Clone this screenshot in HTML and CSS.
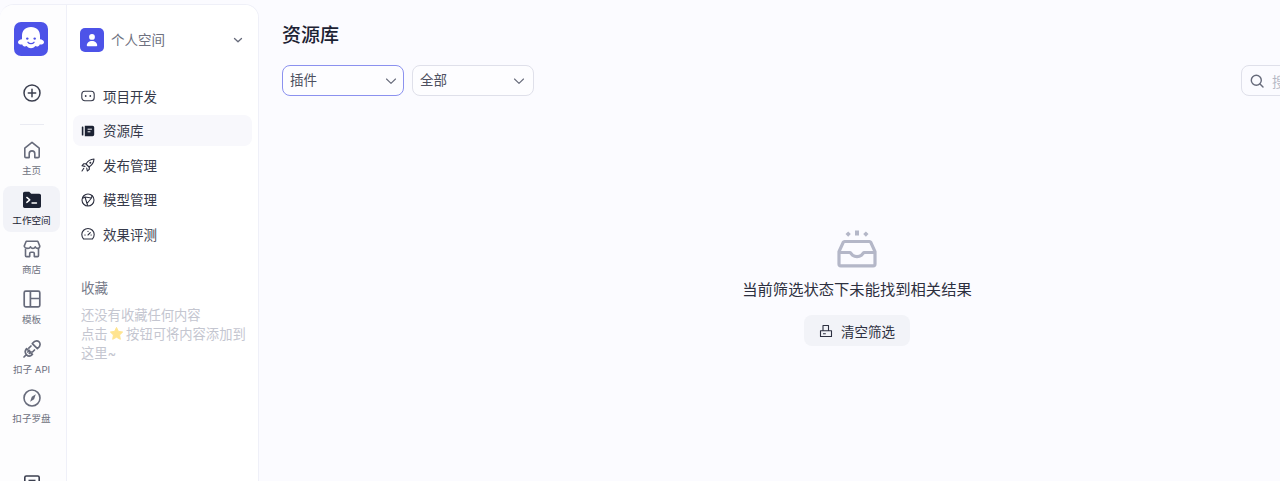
FILE: index.html
```html
<!DOCTYPE html>
<html lang="zh-CN">
<head>
<meta charset="utf-8">
<title>资源库</title>
<link rel="stylesheet" href="styles.css">
</head>
<body>
<div class="app">
  <div class="shell">
  <nav class="rail">
    <div class="logo">
      <svg viewBox="0 0 34 34" width="34" height="34"><rect width="34" height="34" rx="7" fill="#4d53e8"/><path d="M17 5c-5.800 0-9 3.700-9 8.800v3.400c-2 .2-4 1.300-4 3 0 1.800 2.300 2.500 4.300 2.200.7 2.200 2.900 2.500 4.400 1.600 1 1.500 3 2.200 4.300 2.200s3.300-.7 4.300-2.200c1.500.9 3.700.6 4.400-1.600 2 .3 4.300-.4 4.300-2.200 0-1.700-2-2.800-4-3v-3.400C26 8.700 22.800 5 17 5z" fill="#fff"/><circle cx="13.300" cy="16.600" r="1.200" fill="#4d53e8"/><circle cx="20.700" cy="16.600" r="1.200" fill="#4d53e8"/><path d="M14 20.300c1.400 1.800 4.600 1.800 6 0" fill="none" stroke="#4d53e8" stroke-width="1.300" stroke-linecap="round"/></svg>
    </div>
    <button class="rail-add" type="button" aria-label="新建">
      <svg viewBox="0 0 18 18" width="18" height="18" fill="none" stroke="#3b3f4f" stroke-width="1.500" stroke-linecap="round"><circle cx="9" cy="9" r="8"/><path d="M9 5.300v7.400M5.300 9h7.400"/></svg>
    </button>
    <div class="rail-sep"></div>
    <a class="rail-item">
      <svg viewBox="0 0 18 18" width="18" height="18" fill="none" stroke="#676b7b" stroke-width="1.600" stroke-linejoin="round"><path d="M9 1.300 1.800 7.200v8.200c0 .7.500 1.200 1.200 1.200h3.200v-3.900a2.800 2.800 0 0 1 5.600 0v3.900H15c.7 0 1.200-.5 1.200-1.200V7.200z"/></svg>
      <span>主页</span>
    </a>
    <a class="rail-item active">
      <svg viewBox="0 0 18 18" width="18" height="18"><path d="M0 2.500C0 1.500.7.800 1.700.8h4.500l2 1.900h8c1 0 1.800.8 1.800 1.800v10.800c0 1-.8 1.700-1.800 1.700H1.700C.7 16.900 0 16.200 0 15.200z" fill="#1c2233"/><path d="m3.800 6.400 3 2.500-3 2.500" fill="none" stroke="#fff" stroke-width="1.400" stroke-linecap="round" stroke-linejoin="round"/><path d="M9 12h4.500" stroke="#fff" stroke-width="1.400" stroke-linecap="round"/></svg>
      <span>工作空间</span>
    </a>
    <a class="rail-item">
      <svg viewBox="0 0 18 18" width="18" height="18" fill="none" stroke="#676b7b" stroke-width="1.600" stroke-linejoin="round"><path d="M3.200 1.300h11.600l2 4.800c0 1.500-1 2.300-2.100 2.300s-1.900-.7-2.400-1.600c-.5.900-1.300 1.600-2.400 1.600S8 7.700 7.500 6.800C7 7.700 6.100 8.400 4.900 8.400S1.200 7.600 1.200 6.100z"/><path d="M2.500 8.400v7.300c0 .5.400.9.900.9h3.300v-3.200c0-.7.500-1.200 1.200-1.200h2.200c.7 0 1.200.5 1.200 1.200v3.200h3.300c.5 0 .9-.4.900-.9V8.400"/></svg>
      <span>商店</span>
    </a>
    <a class="rail-item">
      <svg viewBox="0 0 18 18" width="18" height="18" fill="none" stroke="#676b7b" stroke-width="1.700"><rect x="1.200" y="1.200" width="15.600" height="15.600" rx="1.500"/><path d="M7.400 1.200v15.600M7.400 8.500h9.400"/></svg>
      <span>模板</span>
    </a>
    <a class="rail-item">
      <svg viewBox="0 0 18 18" width="18" height="18" fill="none" stroke="#676b7b" stroke-width="1.700" stroke-linecap="round" stroke-linejoin="round"><path d="M3.600 8.600 9.400 14.400c-1.900 1.900-4.300 1.900-5.800.4s-1.900-3.900 0-6.200zM3.300 14.700 1 17M6.500 10.300l-1.700 1.700M8 11.800l-1.700 1.700"/><path d="M9.300 3.600 14.400 8.700c1.500-1.200 2.700-2.800 2.700-4.300 0-1.900-1.600-3.500-3.500-3.500-1.500 0-3.100 1.200-4.300 2.700z"/><path d="M8 6 5.800 8.200M11.500 10l-2 2"/></svg>
      <span>扣子 API</span>
    </a>
    <a class="rail-item">
      <svg viewBox="0 0 18 18" width="18" height="18"><circle cx="9" cy="9" r="8" fill="none" stroke="#676b7b" stroke-width="1.600"/><path d="m12.800 5.200-1.700 5.100-4 2.500 1.700-5.100z" fill="#676b7b"/></svg>
      <span>扣子罗盘</span>
    </a>
    <a class="rail-item rail-bottom">
      <svg viewBox="0 0 18 18" width="18" height="18" fill="none" stroke="#3b3f4f" stroke-width="1.600"><rect x="1.800" y="1" width="14.400" height="15" rx="1.500"/><path d="M5.500 5.500h7"/></svg>
    </a>
  </nav>

  <aside class="side">
    <div class="space">
      <span class="space-avatar">
        <svg viewBox="0 0 24 24" width="24" height="24"><rect width="24" height="24" rx="5" fill="#4d53e8"/><circle cx="12" cy="8.900" r="2.900" fill="#fff"/><path d="M6.800 17.500c0-2.800 2.200-4.600 5.200-4.600s5.200 1.800 5.200 4.600c0 .4-.3.700-.7.700H7.500c-.4 0-.7-.3-.7-.7z" fill="#fff"/></svg>
      </span>
      <span class="space-name">个人空间</span>
      <svg class="space-caret" viewBox="0 0 12 12" width="12" height="12" fill="none" stroke="#676b7b" stroke-width="1.300" stroke-linecap="round" stroke-linejoin="round"><path d="m2.500 4.500 3.500 3.300 3.500-3.300"/></svg>
    </div>

    <ul class="menu">
      <li class="menu-item">
        <svg viewBox="0 0 14 14" width="14" height="14" fill="none" stroke="#363a4a" stroke-width="1.100"><rect x=".8" y="2.300" width="12.400" height="9.400" rx="3"/><circle cx="4.700" cy="7" r=".9" fill="#363a4a" stroke="none"/><circle cx="9.300" cy="7" r=".9" fill="#363a4a" stroke="none"/></svg>
        <span>项目开发</span>
      </li>
      <li class="menu-item selected">
        <svg viewBox="0 0 14 14" width="14" height="14"><rect x=".8" y="2.500" width="1.600" height="9" rx=".6" fill="#1c2233"/><path d="M3.800 1.800h7.700c1 0 1.700.7 1.700 1.700v7c0 1-.7 1.700-1.700 1.700H3.800z" fill="#1c2233"/><path d="M7 5.200h3.500M7 7.800h2" stroke="#f8f8fc" stroke-width="1" stroke-linecap="round"/></svg>
        <span>资源库</span>
      </li>
      <li class="menu-item">
        <svg viewBox="0 0 14 14" width="14" height="14" fill="none" stroke="#2d3040" stroke-width="1.100" stroke-linejoin="round" stroke-linecap="round"><path d="M13 1c-3.500.2-6 1.700-8 5l3 3c3.300-2 4.800-4.500 5-8z"/><circle cx="9.300" cy="4.700" r="1" fill="#2d3040" stroke="none"/><path d="M5 5.800H2.600L1 7.800l3 .6M8.300 9v2.400L6.300 13l-.6-3M2.800 10.300 1 13"/></svg>
        <span>发布管理</span>
      </li>
      <li class="menu-item">
        <svg viewBox="0 0 14 14" width="14" height="14" fill="none" stroke="#2d3040" stroke-width="1.100" stroke-linejoin="round"><circle cx="7" cy="7" r="6"/><path d="M4 4l6.500 1L6 10.500zM4 4 1.200 5.500M10.500 5l.6-2.700M6 10.500l.8 2.400"/></svg>
        <span>模型管理</span>
      </li>
      <li class="menu-item">
        <svg viewBox="0 0 14 14" width="14" height="14" fill="none" stroke="#2d3040" stroke-width="1.100" stroke-linecap="round"><path d="M2.600 12h8.800A6.200 6.200 0 1 0 2.600 12z"/><path d="m7 8 2.300-2.300M3.800 8h.4M10 8h.3M7 4.200v.3"/></svg>
        <span>效果评测</span>
      </li>
    </ul>

    <div class="fav">
      <div class="fav-title">收藏</div>
      <p class="fav-empty">还没有收藏任何内容<br>点击 <svg class="star" viewBox="0 0 16 16" width="15" height="15"><path d="m8 1.500 2 4.200 4.600.7-3.300 3.200.8 4.600L8 12l-4.100 2.200.8-4.600L1.400 6.400 6 5.700z" fill="#ffe48f" stroke="#ffe48f" stroke-width="1" stroke-linejoin="round"/></svg> 按钮可将内容添加到这里~</p>
    </div>
  </aside>
  </div>

  <main class="main">
    <h1 class="title">资源库</h1>
    <div class="toolbar">
      <div class="select focus"><span>插件</span><svg viewBox="0 0 12 12" width="12" height="12" fill="none" stroke="#676b7b" stroke-width="1.100" stroke-linecap="round" stroke-linejoin="round"><path d="m1.500 4 4.500 4.300L10.500 4"/></svg></div>
      <div class="select"><span>全部</span><svg viewBox="0 0 12 12" width="12" height="12" fill="none" stroke="#676b7b" stroke-width="1.100" stroke-linecap="round" stroke-linejoin="round"><path d="m1.500 4 4.500 4.300L10.500 4"/></svg></div>
      <div class="search">
        <svg viewBox="0 0 14 14" width="14" height="14" fill="none" stroke="#676b7b" stroke-width="1.400" stroke-linecap="round"><circle cx="6.300" cy="6.300" r="5"/><path d="m10 10 3 3"/></svg>
        <span>搜索</span>
      </div>
    </div>
    <div class="empty">
      <svg class="empty-icon" viewBox="0 0 40 40" width="40" height="40"><g fill="#b4b7c8"><rect x="18" y=".5" width="4" height="5"/><path d="m8.500 4 2.700-2.600 2.600 2.600-2.600 2.700zM26.200 4l2.700-2.600L31.500 4l-2.600 2.700z"/></g><path d="M7.500 11.500h25c.6 0 1 .3 1.300.8l4.200 9.400v12.400c0 1-.8 1.800-1.800 1.800H3.800c-1 0-1.800-.8-1.800-1.800V21.700l4.200-9.400c.3-.5.700-.8 1.300-.8zM2.200 22.500h11l2.400 2.800c2.400 1.800 6.400 1.800 8.800 0l2.400-2.800h11.100" fill="none" stroke="#b4b7c8" stroke-width="3.200" stroke-linejoin="round"/></svg>
      <div class="empty-text">当前筛选状态下未能找到相关结果</div>
      <button class="clear" type="button">
        <svg viewBox="0 0 14 14" width="14" height="14" fill="none" stroke="#2d3040" stroke-width="1.100" stroke-linejoin="round"><path d="M1.500 12.500h11V6.800h-11zM4 6.800V1.500h5.500v5.300M4 9.700h2.800"/></svg>
        <span>清空筛选</span>
      </button>
    </div>
  </main>
</div>
</body>
</html>
```
FILE: styles.css
```css
* { box-sizing: border-box; }
html, body { margin: 0; height: 100%; overflow: hidden; }
body {
  background: #fbfbff;
  color: #1c2233;
  font-family: Inter, "Noto Sans CJK SC", "Noto Sans", sans-serif;
}
.app { display: flex; width: 1280px; height: 481px; overflow: hidden; }

.shell {
  width: 259px;
  flex: none;
  height: 540px;
  margin-top: 4px;
  display: flex;
  background: #fff;
  border-top: 1px solid #eff0f8;
  border-right: 1px solid #eff0f8;
  border-radius: 14px 14px 0 0;
  overflow: hidden;
}
.rail {
  width: 67px;
  flex: none;
  display: flex;
  flex-direction: column;
  align-items: center;
  padding: 17px 3px 0 0;
  background: #fdfdfe;
  border-right: 1px solid #eff0f8;
}
.logo { width: 34px; height: 34px; margin-right: 1px; }
.logo svg, .rail-add svg { display: block; }
.rail-add {
  margin-top: 28px;
  padding: 0;
  width: 18px;
  height: 18px;
  border: 0;
  background: none;
}
.rail-sep {
  width: 24px;
  height: 1px;
  margin: 22px 0 11.300px;
  background: #eaebf2;
}
.rail-item {
  width: 57px;
  height: 46px;
  margin-bottom: 3.600px;
  border-radius: 8px;
  display: flex;
  flex-direction: column;
  align-items: center;
  justify-content: flex-start;
  padding-top: 5px;
  font-size: 9.600px;
  line-height: 14px;
  color: #6e7180;
  white-space: nowrap;
  flex: none;
}
.rail-item span { margin-top: 5px; }
.rail-item.active { background: #f2f3f8; color: #1c2233; }
.rail-bottom { margin-top: 36px; }

.side {
  flex: 1;
  min-width: 0;
  padding: 23px 6px 0;
  background: #fff;
}
.space {
  height: 24px;
  padding: 0 8px 0 7px;
  display: flex;
  align-items: center;
  font-size: 13.500px;
  color: #6e7180;
}
.space-avatar { width: 24px; height: 24px; }
.space-avatar svg { display: block; }
.space-name { margin-left: 7px; flex: 1; position: relative; top: -1px; }
.menu { list-style: none; margin: 28.800px 0 0; padding: 0; }
.menu-item {
  height: 31px;
  margin-bottom: 3.500px;
  padding: 0 8px;
  border-radius: 8px;
  display: flex;
  align-items: center;
  gap: 8px;
  font-size: 13.500px;
  color: #363a4a;
  width: 179px;
}
.menu-item svg { flex: none; }
.menu-item span { position: relative; top: -0.600px; }
.menu-item.selected { background: #f8f8fc; }
.fav { padding: 0 2px 0 8px; margin-top: 28.200px; }
.fav-title { font-size: 13.500px; line-height: 20px; color: #787b8a; }
.fav-empty {
  margin: 8px 0 0;
  font-size: 13.300px;
  line-height: 19px;
  color: #c4c6d0;
}
.star { vertical-align: -2px; margin: 0 -2px; }

.main {
  flex: none;
  width: 1173px;
  padding: 0 0 0 23px;
  display: flex;
  flex-direction: column;
}
.title {
  margin: 23px 0 0;
  font-size: 19px;
  line-height: 26px;
  font-weight: 500;
  color: #1c2233;
}
.toolbar { display: flex; gap: 8px; margin-top: 16px; align-items: center; }
.select {
  width: 122px;
  height: 31px;
  padding: 0 8px 0 7px;
  border: 1px solid #dfe0ea;
  border-radius: 8px;
  background: #fdfdff;
  display: flex;
  align-items: center;
  justify-content: space-between;
  font-size: 13.500px;
  color: #4d5060;
}
.select span { position: relative; top: -2px; }
.select.focus { border-color: #8b91ef; padding-right: 6px; }
.search {
  width: 191px;
  height: 31px;
  margin-left: auto;
  padding: 0 8px;
  border: 1px solid #dfe0ea;
  border-radius: 8px;
  display: flex;
  align-items: center;
  gap: 8px;
  font-size: 13.500px;
  color: #b4b7c4;
}
.empty {
  display: flex;
  flex-direction: column;
  align-items: center;
  margin-top: 134px;
}
.empty-icon { display: block; }
.empty-text { margin-top: 9px; font-size: 15.300px; line-height: 22px; color: #2d3040; }
.clear {
  margin-top: 14px;
  width: 106px;
  height: 31px;
  padding: 0;
  border: 0;
  border-radius: 8px;
  background: #f2f3f8;
  display: flex;
  align-items: center;
  justify-content: center;
  gap: 8px;
  font: inherit;
  font-size: 13.500px;
  color: #2d3040;
}
```
